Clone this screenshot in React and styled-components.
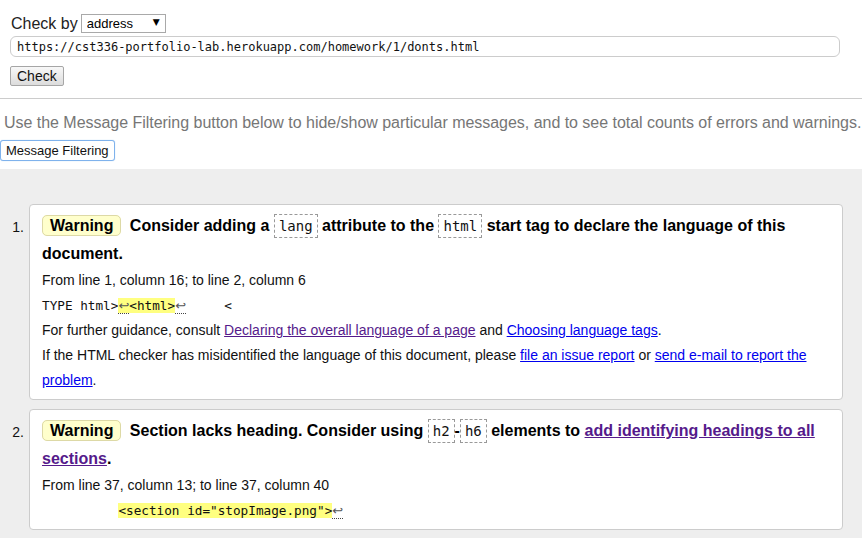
import React from "react";
import styled, { createGlobalStyle } from "styled-components";

const Global = createGlobalStyle`
  html, body { margin: 0; padding: 0; background: #fff; }
  body { font-family: "Liberation Sans", Arial, sans-serif; color: #111; }
`;

const Form = styled.form`
  padding: 14px 10px 12px 10px;
  border-bottom: 1px solid #ccc;
`;

const CheckByRow = styled.div`
  display: flex;
  align-items: center;
  height: 19px;
  font-size: 16px;
  color: #222;
  padding-left: 1px;
`;

const SelectWrap = styled.span`
  position: relative;
  display: inline-block;
  margin-left: 3px;
  &::after {
    content: "▼";
    position: absolute;
    right: 6px;
    top: 3px;
    font-size: 9px;
    color: #000;
    pointer-events: none;
    font-family: "DejaVu Sans", sans-serif;
  }
`;

const Select = styled.select`
  appearance: none;
  -webkit-appearance: none;
  width: 85px;
  height: 19px;
  box-sizing: border-box;
  border: 1px solid #a9a9a9;
  border-radius: 0;
  background: #fff;
  font-family: "Liberation Sans", Arial, sans-serif;
  font-size: 13px;
  padding: 0 0 0 5px;
  color: #000;
  outline: none;
`;

const UrlInput = styled.input`
  display: block;
  margin-top: 3px;
  width: 830px;
  height: 21px;
  box-sizing: border-box;
  border: 1px solid #ccc;
  border-radius: 6px;
  padding: 0 6px;
  font-family: "DejaVu Sans Mono", monospace;
  font-size: 12px;
  color: #111;
  outline: none;
`;

const CheckButton = styled.button`
  display: block;
  margin-top: 9px;
  height: 20px;
  box-sizing: border-box;
  padding: 0 6px;
  border: 1px solid #a6a6a6;
  border-radius: 2px;
  background: linear-gradient(#f8f8f8, #dcdcdc);
  font-family: "Liberation Sans", Arial, sans-serif;
  font-size: 14px;
  color: #111;
`;

const Intro = styled.p`
  margin: 15px 0 0 0;
  padding: 0 4px;
  font-size: 16px;
  letter-spacing: -0.03px;
  line-height: 18px;
  color: #767676;
  white-space: nowrap;
`;

const FilterButton = styled.button`
  display: block;
  margin-top: 8px;
  height: 21px;
  box-sizing: border-box;
  padding: 0 5px;
  border: 1px solid #7fb2ec;
  border-radius: 3px;
  background: #fff;
  box-shadow: 0 0 1px #9cc5f2;
  font-family: "Liberation Sans", Arial, sans-serif;
  font-size: 13px;
  color: #111;
`;

const Results = styled.ol`
  list-style: none;
  margin: 8px 0 0 0;
  padding: 35px 19px 8px 0;
  background: #eee;
  display: flex;
  flex-direction: column;
  gap: 9px;
`;

const Item = styled.li`
  display: flex;
  align-items: flex-start;
`;

const Num = styled.span`
  flex: 0 0 29px;
  box-sizing: border-box;
  text-align: right;
  padding: 9px 5px 0 0;
  font-size: 14px;
  line-height: 28px;
  color: #111;
`;

const Card = styled.div`
  flex: 1;
  background: #fff;
  border: 1px solid #ccc;
  border-radius: 4px;
  padding: 7px 12px 6px 12px;
`;

const Heading = styled.p`
  margin: 0;
  font-size: 16px;
  font-weight: bold;
  line-height: 28px;
  color: #000;
`;

const Badge = styled.span`
  background: #ffffcc;
  border: 1px solid #ddd9a6;
  border-radius: 5px;
  padding: 1px 7px;
  margin-right: 4px;
`;

const Code = styled.code`
  font-family: "DejaVu Sans Mono", monospace;
  font-size: 14px;
  font-weight: normal;
  border: 1px dashed #999;
  padding: 3px 4px;
  color: #111;
`;

const Line = styled.p`
  margin: 0;
  font-size: 14px;
  line-height: 25px;
  color: #111;
`;

const Extract = styled.p`
  margin: 0;
  font-family: "DejaVu Sans Mono", monospace;
  font-size: 12.7px;
  line-height: 25px;
  white-space: pre;
  color: #111;
`;

const Hl = styled.span`
  background: #ffff80;
`;

const Lf = styled.span`
  border-bottom: 1px dotted #444;
  color: #555;
  font-family: "DejaVu Sans", sans-serif;
  font-size: 13px;
`;

const Link = styled.a`
  color: ${(p) => (p.$visited ? "#551a8b" : "#0000ee")};
  text-decoration: underline;
`;

export default function App() {
  return (
    <>
      <Global />
      <Form onSubmit={(e) => e.preventDefault()}>
        <CheckByRow>
          Check by
          <SelectWrap>
            <Select defaultValue="address">
              <option value="address">address</option>
              <option value="file">file upload</option>
              <option value="text">text input</option>
            </Select>
          </SelectWrap>
        </CheckByRow>
        <UrlInput
          type="text"
          defaultValue="https://cst336-portfolio-lab.herokuapp.com/homework/1/donts.html"
        />
        <CheckButton type="submit">Check</CheckButton>
      </Form>
      <Intro>
        Use the Message Filtering button below to hide/show particular messages, and to see total counts of errors and warnings.
      </Intro>
      <FilterButton type="button">Message Filtering</FilterButton>
      <Results>
        <Item>
          <Num>1.</Num>
          <Card>
            <Heading>
              <Badge>Warning</Badge> Consider adding a <Code>lang</Code> attribute to the{" "}
              <Code>html</Code> start tag to declare the language of this document.
            </Heading>
            <Line>From line 1, column 16; to line 2, column 6</Line>
            <Extract>
              TYPE html&gt;<Hl><Lf>↩</Lf>&lt;html&gt;</Hl><Lf>↩</Lf>{"     <"}
            </Extract>
            <Line>
              For further guidance, consult{" "}
              <Link $visited href="#">Declaring the overall language of a page</Link> and{" "}
              <Link href="#">Choosing language tags</Link>.
            </Line>
            <Line>
              If the HTML checker has misidentified the language of this document, please{" "}
              <Link href="#">file an issue report</Link> or{" "}
              <Link href="#">send e-mail to report the problem</Link>.
            </Line>
          </Card>
        </Item>
        <Item>
          <Num>2.</Num>
          <Card>
            <Heading>
              <Badge>Warning</Badge> Section lacks heading. Consider using <Code>h2</Code>-<Code>h6</Code>{" "}
              elements to <Link $visited href="#">add identifying headings to all sections</Link>.
            </Heading>
            <Line>From line 37, column 13; to line 37, column 40</Line>
            <Extract>
              {"          "}<Hl>&lt;section id="stopImage.png"&gt;</Hl><Lf>↩</Lf>
            </Extract>
          </Card>
        </Item>
      </Results>
    </>
  );
}
